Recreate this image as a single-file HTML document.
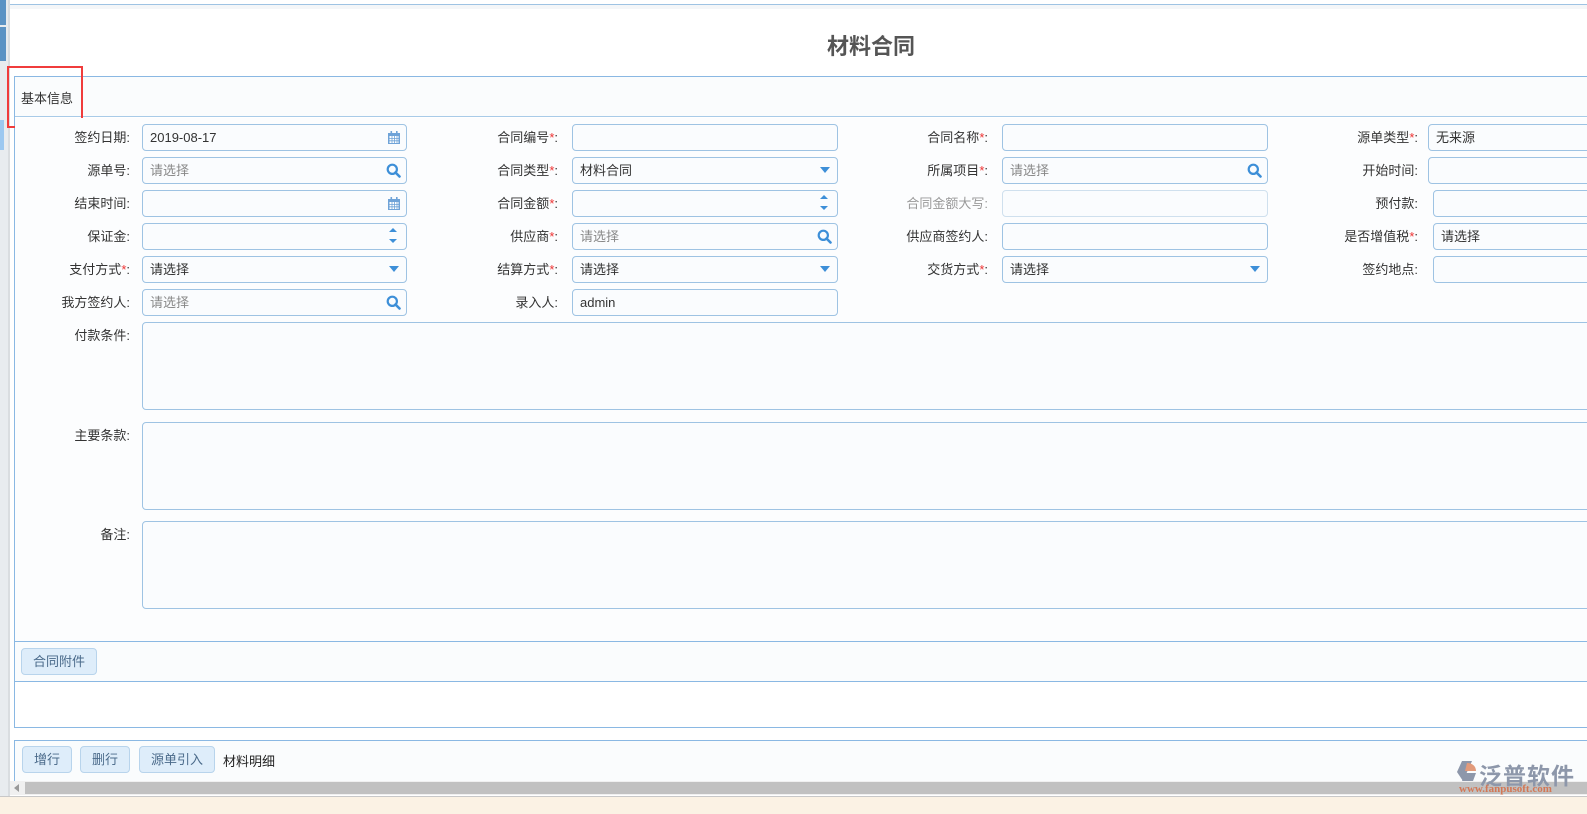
<!DOCTYPE html>
<html><head><meta charset="utf-8"><style>
*{box-sizing:border-box;margin:0;padding:0}
body{width:1587px;height:814px;overflow:hidden;background:#fff;position:relative;font-family:"Liberation Sans","Noto Sans CJK SC",sans-serif;font-size:13px;color:#333}
.a{position:absolute}
.lb{position:absolute;text-align:right;width:130px;height:27px;line-height:27px;font-size:13px;color:#333}
.lb i{color:#e33;font-style:normal}
.in{position:absolute;height:27px;border:1px solid #9ec3e3;border-radius:4px;background:#fafcfe;line-height:25px;padding-left:7px;font-size:13px;color:#333}
.ph{color:#888}
.ic{position:absolute;right:5px;top:5px}
.btn{position:absolute;height:27px;line-height:25px;border:1px solid #b8d4ec;border-radius:4px;background:#deedfa;color:#4a6a8a;padding:0 11px;font-size:13px}
</style></head><body>
<div class="a" style="left:0;top:0;width:8px;height:814px;background:#e8ecef"></div>
<div class="a" style="left:0;top:0;width:6px;height:25px;background:#5b93c4"></div>
<div class="a" style="left:0;top:27px;width:6px;height:34px;background:#5b93c4"></div>
<div class="a" style="left:0;top:120px;width:4px;height:30px;background:#9cc8f0"></div>
<div class="a" style="left:8px;top:0;width:2px;height:814px;background:#d9dde0"></div>
<div class="a" style="left:10px;top:4px;width:1577px;height:1px;background:#9ec3e3"></div>
<div class="a" style="left:10px;top:5px;width:1577px;height:4px;background:#f4f6f8"></div>
<div class="a" style="left:0;top:29px;width:1587px;text-align:center;font-size:22px;font-weight:bold;color:#555;padding-left:155px">材料合同</div>

<div class="a" style="left:14px;top:76px;width:1573px;height:652px;border:1px solid #8ab8e3;border-right:none;background:#fff"></div>
<div class="a" style="left:15px;top:77px;width:1572px;height:40px;background:#fafcfd;border-bottom:1px solid #a8cbe8"></div>
<div class="a" style="left:21px;top:88px;font-size:13px;color:#333">基本信息</div>
<div class="a" style="left:7px;top:66px;width:76px;height:62px;border:2px solid #f03c3c"></div>
<div class="a" style="left:15px;top:118px;width:1572px;height:523px;background:#fcfdfe"></div>

<!-- row 1 -->
<div class="lb" style="left:0;top:124px">签约日期:</div>
<div class="in" style="left:142px;top:124px;width:265px">2019-08-17<svg class="ic" width="14" height="15" viewBox="0 0 14 15"><rect x="1" y="3" width="12" height="11" fill="#6fa3d8"/><rect x="2.5" y="6" width="9" height="7" fill="#fff"/><path d="M2.5 8.5h9M2.5 10.8h9M5 6v7M7.5 6v7M10 6v7" stroke="#6fa3d8" stroke-width=".8"/><rect x="3.5" y="1" width="1.6" height="3.5" fill="#6fa3d8"/><rect x="9" y="1" width="1.6" height="3.5" fill="#6fa3d8"/></svg></div>
<div class="lb" style="left:428px;top:124px">合同编号<i>*</i>:</div>
<div class="in" style="left:572px;top:124px;width:266px"></div>
<div class="lb" style="left:858px;top:124px">合同名称<i>*</i>:</div>
<div class="in" style="left:1002px;top:124px;width:266px"></div>
<div class="lb" style="left:1288px;top:124px">源单类型<i>*</i>:</div>
<div class="in" style="left:1428px;top:124px;width:170px">无来源</div>
<!-- row 2 -->
<div class="lb" style="left:0;top:157px">源单号:</div>
<div class="in" style="left:142px;top:157px;width:265px"><span class="ph">请选择</span><svg class="ic" width="15" height="15" viewBox="0 0 15 15"><circle cx="6.3" cy="6.3" r="4.6" fill="none" stroke="#3d8fd8" stroke-width="2.2"/><path d="M9.5 9.5l4 4" stroke="#3d8fd8" stroke-width="2.6" stroke-linecap="round"/></svg></div>
<div class="lb" style="left:428px;top:157px">合同类型<i>*</i>:</div>
<div class="in" style="left:572px;top:157px;width:266px">材料合同<svg class="ic" style="top:9px;right:7px" width="10" height="7"><path d="M0 0h10L5 6z" fill="#3d8fd8"/></svg></div>
<div class="lb" style="left:858px;top:157px">所属项目<i>*</i>:</div>
<div class="in" style="left:1002px;top:157px;width:266px"><span class="ph">请选择</span><svg class="ic" width="15" height="15" viewBox="0 0 15 15"><circle cx="6.3" cy="6.3" r="4.6" fill="none" stroke="#3d8fd8" stroke-width="2.2"/><path d="M9.5 9.5l4 4" stroke="#3d8fd8" stroke-width="2.6" stroke-linecap="round"/></svg></div>
<div class="lb" style="left:1288px;top:157px">开始时间:</div>
<div class="in" style="left:1428px;top:157px;width:170px"></div>
<!-- row 3 -->
<div class="lb" style="left:0;top:190px">结束时间:</div>
<div class="in" style="left:142px;top:190px;width:265px"><svg class="ic" width="14" height="15" viewBox="0 0 14 15"><rect x="1" y="3" width="12" height="11" fill="#6fa3d8"/><rect x="2.5" y="6" width="9" height="7" fill="#fff"/><path d="M2.5 8.5h9M2.5 10.8h9M5 6v7M7.5 6v7M10 6v7" stroke="#6fa3d8" stroke-width=".8"/><rect x="3.5" y="1" width="1.6" height="3.5" fill="#6fa3d8"/><rect x="9" y="1" width="1.6" height="3.5" fill="#6fa3d8"/></svg></div>
<div class="lb" style="left:428px;top:190px">合同金额<i>*</i>:</div>
<div class="in" style="left:572px;top:190px;width:266px"><svg class="ic" style="top:3px;right:9px" width="8" height="18"><path d="M0 5L4 1 8 5zM0 12h8l-4 4z" fill="#3d8fd8"/></svg></div>
<div class="lb" style="left:858px;top:190px;color:#999">合同金额大写:</div>
<div class="in" style="left:1002px;top:190px;width:266px;border-color:#cfe0ee"></div>
<div class="lb" style="left:1288px;top:190px">预付款:</div>
<div class="in" style="left:1433px;top:190px;width:170px"></div>
<!-- row 4 -->
<div class="lb" style="left:0;top:223px">保证金:</div>
<div class="in" style="left:142px;top:223px;width:265px"><svg class="ic" style="top:3px;right:9px" width="8" height="18"><path d="M0 5L4 1 8 5zM0 12h8l-4 4z" fill="#3d8fd8"/></svg></div>
<div class="lb" style="left:428px;top:223px">供应商<i>*</i>:</div>
<div class="in" style="left:572px;top:223px;width:266px"><span class="ph">请选择</span><svg class="ic" width="15" height="15" viewBox="0 0 15 15"><circle cx="6.3" cy="6.3" r="4.6" fill="none" stroke="#3d8fd8" stroke-width="2.2"/><path d="M9.5 9.5l4 4" stroke="#3d8fd8" stroke-width="2.6" stroke-linecap="round"/></svg></div>
<div class="lb" style="left:858px;top:223px">供应商签约人:</div>
<div class="in" style="left:1002px;top:223px;width:266px"></div>
<div class="lb" style="left:1288px;top:223px">是否增值税<i>*</i>:</div>
<div class="in" style="left:1433px;top:223px;width:170px">请选择</div>
<!-- row 5 -->
<div class="lb" style="left:0;top:256px">支付方式<i>*</i>:</div>
<div class="in" style="left:142px;top:256px;width:265px">请选择<svg class="ic" style="top:9px;right:7px" width="10" height="7"><path d="M0 0h10L5 6z" fill="#3d8fd8"/></svg></div>
<div class="lb" style="left:428px;top:256px">结算方式<i>*</i>:</div>
<div class="in" style="left:572px;top:256px;width:266px">请选择<svg class="ic" style="top:9px;right:7px" width="10" height="7"><path d="M0 0h10L5 6z" fill="#3d8fd8"/></svg></div>
<div class="lb" style="left:858px;top:256px">交货方式<i>*</i>:</div>
<div class="in" style="left:1002px;top:256px;width:266px">请选择<svg class="ic" style="top:9px;right:7px" width="10" height="7"><path d="M0 0h10L5 6z" fill="#3d8fd8"/></svg></div>
<div class="lb" style="left:1288px;top:256px">签约地点:</div>
<div class="in" style="left:1433px;top:256px;width:170px"></div>
<!-- row 6 -->
<div class="lb" style="left:0;top:289px">我方签约人:</div>
<div class="in" style="left:142px;top:289px;width:265px"><span class="ph">请选择</span><svg class="ic" width="15" height="15" viewBox="0 0 15 15"><circle cx="6.3" cy="6.3" r="4.6" fill="none" stroke="#3d8fd8" stroke-width="2.2"/><path d="M9.5 9.5l4 4" stroke="#3d8fd8" stroke-width="2.6" stroke-linecap="round"/></svg></div>
<div class="lb" style="left:428px;top:289px">录入人:</div>
<div class="in" style="left:572px;top:289px;width:266px">admin</div>
<!-- textareas -->
<div class="lb" style="left:0;top:322px">付款条件:</div>
<div class="in" style="left:142px;top:322px;width:1460px;height:88px"></div>
<div class="lb" style="left:0;top:422px">主要条款:</div>
<div class="in" style="left:142px;top:422px;width:1460px;height:88px"></div>
<div class="lb" style="left:0;top:521px">备注:</div>
<div class="in" style="left:142px;top:521px;width:1460px;height:88px"></div>

<div class="a" style="left:15px;top:641px;width:1572px;height:1px;background:#8ab8e3"></div>
<div class="a" style="left:15px;top:642px;width:1572px;height:40px;background:#fafcfd;border-bottom:1px solid #8ab8e3"></div>
<div class="btn" style="left:21px;top:648px">合同附件</div>

<div class="a" style="left:14px;top:740px;width:1573px;height:45px;border:1px solid #8ab8e3;border-right:none;background:#fafcfd"></div>
<div class="btn" style="left:22px;top:746px">增行</div>
<div class="btn" style="left:80px;top:746px">删行</div>
<div class="btn" style="left:139px;top:746px">源单引入</div>
<div class="a" style="left:223px;top:751px;font-size:13px;color:#222">材料明细</div>

<div class="a" style="left:10px;top:781px;width:1577px;height:14px;background:#f0f0f0"></div>
<div class="a" style="left:25px;top:782px;width:1562px;height:12px;background:#c1c1c1"></div>
<svg class="a" style="left:14px;top:784px" width="6" height="8"><path d="M5 0v8L0 4z" fill="#999"/></svg>
<div class="a" style="left:0;top:796px;width:1587px;height:18px;background:#fbf2e4;border-top:1px solid #c8c8c8"></div>

<!-- logo -->
<svg class="a" style="left:1456px;top:760px" width="22" height="22" viewBox="0 0 22 22"><path d="M6 1h10l-9 20L1 12z" fill="#8d97aa"/><path d="M11 3c5 0 9 3 9 8H9z" fill="#e29a7a"/><path d="M9 13h11l-3 8H6z" fill="#8d97aa"/></svg>
<div class="a" style="left:1479px;top:757px;font-size:23px;color:#8d97aa;font-weight:bold;letter-spacing:1px">泛普软件</div>
<div class="a" style="left:1459px;top:783px;font-size:11px;color:#d27755;font-family:'Liberation Serif',serif;font-weight:bold">www.fanpusoft.com</div>
</body></html>
